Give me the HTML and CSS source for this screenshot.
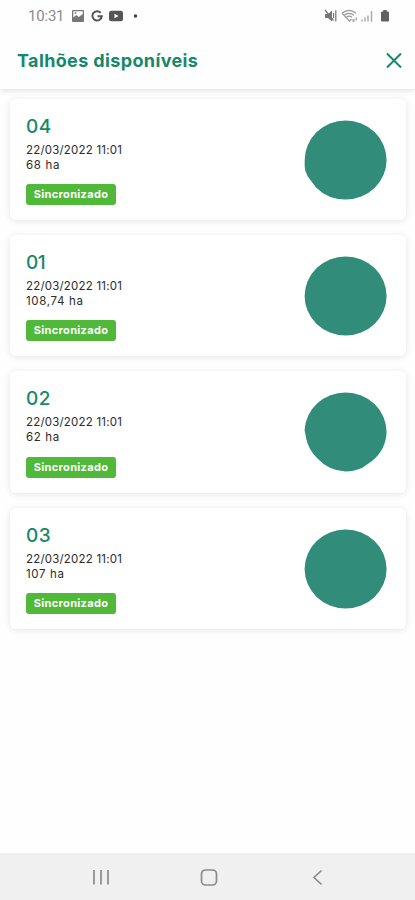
FILE: index.html
```html
<!DOCTYPE html>
<html lang="pt-BR">
<head>
<meta charset="utf-8">
<meta name="viewport" content="width=device-width, initial-scale=1">
<title>Talhões disponíveis</title>
<link rel="stylesheet" href="styles.css">
</head>
<body>
<div class="screen">
  <header class="top">
    <div class="status">
      <span class="clock">10:31</span>
      <svg class="notifications" width="70" height="16" viewBox="0 0 70 16">
        <path fill="#777" fill-rule="evenodd" d="M2 2h10q1 0 1 1v10q0 1-1 1H2q-1 0-1-1V3q0-1 1-1zm.3 1.200v6.300l3-2.500 2.500 2 4-3V3.200z"/>
        <circle cx="4.500" cy="5" r="1" fill="#888"/>
        <path d="M29.700 4.800A4.700 4.700 0 1 0 30.800 8.200H26.500" fill="none" stroke="#555" stroke-width="2"/>
        <rect x="38" y="2.800" width="14" height="10.500" rx="2.500" fill="#555"/>
        <path d="M43.500 5.700v4.600L47.500 8z" fill="#fff"/>
        <circle cx="64.500" cy="8" r="1.700" fill="#444"/>
      </svg>
      <svg class="system" width="68" height="16" viewBox="0 0 68 16">
        <path d="M1 6h3l4-3.500v11L4 10H1z" fill="#777"/>
        <path d="M1 2l8.500 10.500M11.800 2.300v11.200M9.600 5v5" fill="none" stroke="#777" stroke-width="1.200"/>
        <g fill="none" stroke="#999" stroke-width="1.200">
          <path d="M18 5.200Q25-.5 32 5.200M20 7.200Q25 3.500 30 7.200M22.500 9.300Q25 7 28 9.300"/>
          <path d="M18 5.200l7.500 8 2-2"/>
        </g>
        <path d="M28.500 11h2v3h-2zM31.500 9.500h1.500v3h-1.500z" fill="#aaa"/>
        <path d="M38 11.500v2M41 9.500v4M44 7.500v6" stroke="#b5b5b5" stroke-width="1.700"/>
        <path d="M47.500 3v10.800" stroke="#aaa" stroke-width="1.500"/>
        <path d="M59.300 2h3.400v1.500H64q1 0 1 1v8q0 1-1 1h-6q-1 0-1-1v-8q0-1 1-1h1.300z" fill="#606060"/>
      </svg>
    </div>
    <div class="titlebar">
      <h1 class="title">Talhões disponíveis</h1>
      <svg class="close" width="16" height="16" viewBox="0 0 16 16"><path d="M1 .5l14 14M15 .5L1 14.500"/></svg>
    </div>
  </header>
  <main class="list">
    <article class="card">
      <div class="info">
        <h2 class="name">04</h2>
        <p class="meta date">22/03/2022 11:01</p>
        <p class="meta area">68 ha</p>
        <span class="badge">Sincronizado</span>
      </div>
      <svg class="shape" width="83" height="80" viewBox="0 0 83 80"><path d="M41.600 .5A41 39.500 0 0 1 82.600 40A41 39.500 0 0 1 41.600 79.500A41 39.500 0 0 1 12 67.500L3.500 56Q.8 51 .7 47V40A41 39.500 0 0 1 41.600 .5z"/></svg>
    </article>
    <article class="card">
      <div class="info">
        <h2 class="name narrow">01</h2>
        <p class="meta date">22/03/2022 11:01</p>
        <p class="meta area">108,74 ha</p>
        <span class="badge">Sincronizado</span>
      </div>
      <svg class="shape" width="83" height="80" viewBox="0 0 83 80"><ellipse cx="41.600" cy="40" rx="41" ry="39.500"/></svg>
    </article>
    <article class="card">
      <div class="info">
        <h2 class="name">02</h2>
        <p class="meta date">22/03/2022 11:01</p>
        <p class="meta area">62 ha</p>
        <span class="badge">Sincronizado</span>
      </div>
      <svg class="shape" width="83" height="80" viewBox="0 0 83 80"><path d="M41.600 .5A41 39.500 0 0 1 82.600 40A41 39.500 0 0 1 68 69L58 76Q49 79.500 41.600 79.500A41 39.500 0 0 1 13 66A38 38 0 0 1 2.300 47L.6 38A41 39.500 0 0 1 41.600 .5z"/></svg>
    </article>
    <article class="card">
      <div class="info">
        <h2 class="name">03</h2>
        <p class="meta date">22/03/2022 11:01</p>
        <p class="meta area">107 ha</p>
        <span class="badge">Sincronizado</span>
      </div>
      <svg class="shape" width="83" height="80" viewBox="0 0 83 80"><ellipse cx="41.600" cy="40" rx="41" ry="39.500"/></svg>
    </article>
  </main>
  <nav class="navbar">
    <svg width="17" height="18" viewBox="0 0 17 18"><path d="M2 2v14.500M9 2v14.500M16 2v14.500"/></svg>
    <svg width="18" height="18" viewBox="0 0 18 18"><rect x="1.500" y="2" width="15" height="15" rx="4"/></svg>
    <svg width="17" height="18" viewBox="0 0 17 18"><path d="M12.500 2.500L5 9.500l7.500 7"/></svg>
  </nav>
</div>
</body>
</html>
```
FILE: styles.css
```css
* { box-sizing: border-box; }
body { margin: 0; background: #fefefe; font-family: Inter, sans-serif; }
h1, h2, p { margin: 0; }
svg { display: block; flex: none; }
.screen { height: 900px; display: flex; flex-direction: column; overflow: hidden; }
.top { height: 89px; flex: none; background: #fefefe; box-shadow: 0 1px 6px rgba(0, 0, 0, .14); }
.status { height: 32px; display: flex; align-items: center; padding: 0 23px 0 28px; }
.clock { width: 43px; font: 15px/18px Roboto, sans-serif; color: #8c8c8c; letter-spacing: -.2px; }
.system { margin-left: auto; }
.titlebar { height: 57px; display: flex; align-items: center; justify-content: space-between; padding: 0 13px 0 17px; }
.title { font-size: 18px; line-height: 24px; font-weight: 700; letter-spacing: .37px; color: #16886a; }
.close { fill: none; stroke: #16886a; stroke-width: 2; }
.list { flex: 1; display: flex; flex-direction: column; gap: 14.900px; padding: 9.500px 9px 0 10px; }
.card { height: 121.500px; display: flex; justify-content: space-between; padding: 15px 19px 0 16px; background: #fff; border-radius: 6px; box-shadow: 0 1px 6px rgba(0, 0, 0, .11); }
.info { display: flex; flex-direction: column; align-items: flex-start; }
.name { height: 29px; font-size: 19px; line-height: 26px; font-weight: 500; letter-spacing: .4px; color: #16886a; }
.narrow { letter-spacing: -.6px; }
.meta { font-size: 11.500px; line-height: 15px; color: #2b2b2b; white-space: nowrap; }
.date { letter-spacing: .2px; }
.area { letter-spacing: .65px; }
.badge { margin-top: 11.500px; width: 90px; height: 21px; border-radius: 3px; background: #50b93a; color: #fff; font-size: 11px; line-height: 20px; font-weight: 700; letter-spacing: .32px; text-align: center; }
.shape { margin-top: 6px; fill: #318c79; }
.navbar { height: 47px; flex: none; display: flex; align-items: center; justify-content: space-between; padding: 1px 89px 0 92px; background: #f0f0f0; fill: none; stroke: #8b8b8b; stroke-width: 1.700; }
```
